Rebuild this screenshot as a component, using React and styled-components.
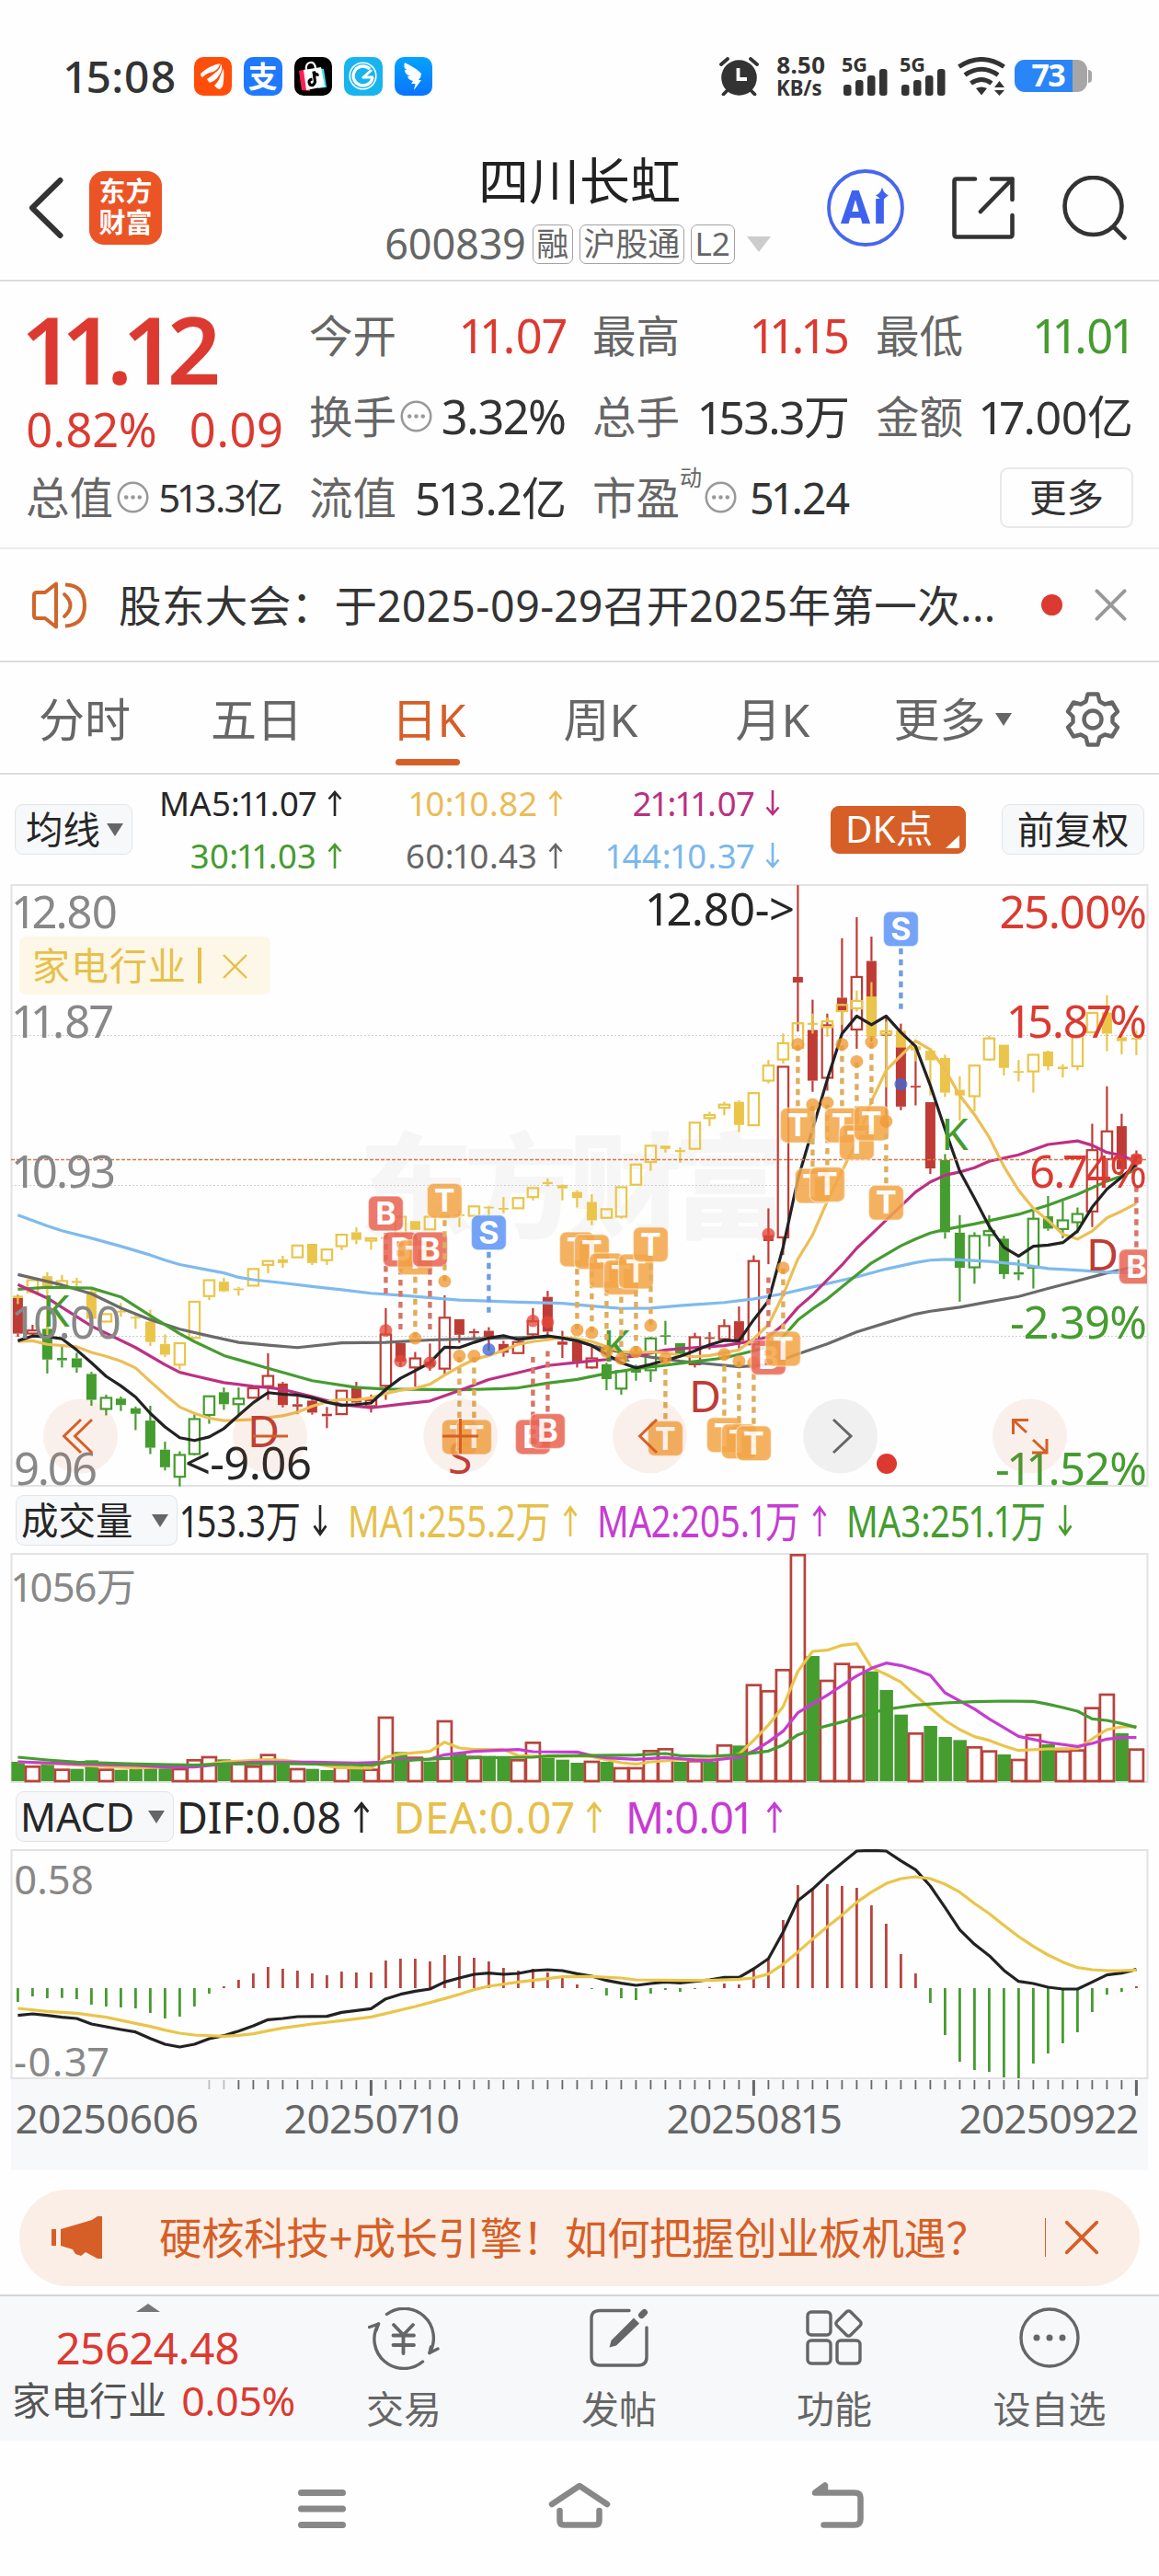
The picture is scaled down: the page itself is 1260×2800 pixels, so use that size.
import React, { useLayoutEffect, useRef, useState } from "react";
import styled, { createGlobalStyle } from "styled-components";

const RED = "#dc3a31";
const GREEN = "#459c2f";
const CANDLE_RED = "#bf3c36";
const GOLD = "#eac54a";
const ORANGE = "#d65f27";
const PURPLE = "#c63cd2";
const INK = "#333333";
const DIM = "#666666";
const FONT = '"Noto Sans", "Noto Sans CJK SC", sans-serif';

const GlobalStyle = createGlobalStyle`
  * { box-sizing: border-box; }
  body { margin: 0; background: #fefefe; }
`;

/* ---------- text ---------- */

const Glyphs = styled.span`
  display: inline-block;
  white-space: nowrap;
  font-size: ${(p) => p.$size}px;
  font-weight: ${(p) => p.$weight || 400};
  color: ${(p) => p.$color || "inherit"};
  font-variant-numeric: proportional-nums;
  transform-origin: 0 50%;
`;

// Makes its text take the given width: by tracking, or by condensing the glyphs.
function Fit({ w, size, weight, color, condense, children }) {
  const ref = useRef(null);
  const [style, setStyle] = useState(undefined);
  useLayoutEffect(() => {
    const natural = ref.current.offsetWidth;
    if (condense) {
      setStyle({ transform: `scaleX(${w / natural})`, marginRight: w - natural });
    } else {
      const track = (w - natural) / (String(children).length - 1);
      setStyle({ letterSpacing: track, marginRight: -track });
    }
  }, []);
  return (
    <Glyphs ref={ref} $size={size} $weight={weight} $color={color} style={style}>
      {children}
    </Glyphs>
  );
}

/* ---------- frame ---------- */

const Screen = styled.main`
  width: 1260px;
  height: 2800px;
  overflow: hidden;
  display: flex;
  flex-direction: column;
  background: #fefefe;
  color: ${INK};
  font-family: ${FONT};
`;

const StatusBar = styled.header`
  height: 166px;
  padding: 0 73px 0 71px;
  display: flex;
  justify-content: space-between;
  align-items: center;
`;

const StatusSide = styled.div`
  display: flex;
  align-items: center;
  gap: ${(p) => p.$gap}px;
`;

const StackedText = styled.div`
  display: flex;
  flex-direction: column;
  line-height: 25px;
  margin: 0 5px 0 6px;
`;

const AppIcons = styled.div`
  display: flex;
  gap: 13px;
  margin-left: 19px;
`;

const AppIcon = styled.div`
  width: 41.5px;
  height: 41.5px;
  border-radius: 10px;
  background: ${(p) => p.$bg};
  display: flex;
  align-items: center;
  justify-content: center;
  color: #fff;
  font-size: 32px;
  font-weight: 700;
  line-height: 1;
`;

const Battery = styled.div`
  display: flex;
  align-items: center;
  margin-left: -3px;
`;

const BatteryBody = styled.div`
  width: 79px;
  height: 35px;
  border-radius: 11px;
  background: linear-gradient(90deg, #2a85f6 0 63px, #a6a6a6 63px);
  color: #fff;
  line-height: 33px;
  padding-left: 19px;
`;

const BatteryNub = styled.div`
  width: 4px;
  height: 14px;
  margin-left: 1px;
  border-radius: 0 4px 4px 0;
  background: #a6a6a6;
`;

const Header = styled.section`
  height: 140px;
  display: grid;
  grid-template-columns: 1fr auto 1fr;
  border-bottom: 2px solid #dcdcdc;
`;

const HeaderLeft = styled.div`
  height: 120px;
  padding-left: 30px;
  display: flex;
  align-items: center;
  gap: 27px;
`;

const HeaderRight = styled.div`
  height: 120px;
  padding-right: 35px;
  display: flex;
  align-items: center;
  justify-content: flex-end;
  gap: 52px;
`;

const Logo = styled.div`
  width: 79px;
  height: 80px;
  border-radius: 16px;
  background: #eb5526;
  color: #fff;
  font-size: 29px;
  font-weight: 700;
  line-height: 34px;
  text-align: center;
  padding-top: 5px;
`;

const TitleBlock = styled.div`
  display: flex;
  flex-direction: column;
  align-items: center;
`;

const Title = styled.h1`
  margin: 0;
  height: 62px;
  font-size: 55px;
  line-height: 60px;
  font-weight: 400;
  color: #222;
`;

const CodeRow = styled.div`
  margin: 16px 4px 0 0;
  height: 43px;
  display: flex;
  align-items: center;
  gap: 7px;
  color: ${DIM};
  line-height: 40px;
`;

const Tag = styled.span`
  width: ${(p) => p.$w}px;
  height: 43px;
  border: 1.5px solid #a2a2a2;
  border-radius: 7px;
  font-size: 35px;
  line-height: 39px;
  text-align: center;
  white-space: nowrap;
`;

const Caret = styled.i`
  width: 0;
  height: 0;
  border-left: ${(p) => p.$w / 2}px solid transparent;
  border-right: ${(p) => p.$w / 2}px solid transparent;
  ${(p) => (p.$up ? "border-bottom" : "border-top")}: ${(p) => p.$h}px solid ${(p) => p.$color || DIM};
  margin-left: ${(p) => p.$ml || 0}px;
`;

/* ---------- quote ---------- */

const Quote = styled.section`
  height: 292px;
  padding: 0 28px;
  display: grid;
  grid-template-columns: repeat(4, 280px);
  column-gap: 28px;
  border-bottom: 2px solid #ececec;
`;

const LeadColumn = styled.div`
  padding-top: 22px;
  display: grid;
  grid-template-rows: 104px 70px 78px;
`;

const QuoteColumn = styled.div`
  padding-top: 16px;
  display: grid;
  grid-template-rows: 87px 88px 88px;
`;

const Row = styled.div`
  display: flex;
  align-items: center;
  justify-content: space-between;
  line-height: 60px;
`;

const Price = styled.div`
  display: flex;
  line-height: 102px;
  color: ${RED};
`;

const Label = styled.span`
  display: flex;
  align-items: center;
  gap: 4px;
  font-size: 47.5px;
  color: ${DIM};
`;

const Dynamic = styled.sup`
  align-self: flex-start;
  margin: -22px -1px 0 -4px;
  font-size: 24px;
  line-height: 60px;
`;

const MoreButton = styled.button`
  width: 145px;
  height: 66px;
  margin-left: auto;
  border: 2px solid #e8e8e8;
  border-radius: 9px;
  background: #fefefe;
  color: ${INK};
  font: 400 40.5px/56px ${FONT};
  padding: 0;
`;

const Notice = styled.section`
  height: 123px;
  padding: 0 35px;
  display: flex;
  align-items: center;
  border-bottom: 2px solid #dcdcdc;
  line-height: 60px;
`;

const NoticeText = styled.div`
  display: flex;
  width: 1001px;
  padding-left: 34px;
`;

const Dot = styled.i`
  width: 23px;
  height: 23px;
  border-radius: 50%;
  background: ${RED};
  margin: 0 35px 0 auto;
`;

const Tabs = styled.nav`
  height: 122px;
  display: flex;
  border-bottom: 2px solid #dcdcdc;
  padding-right: 42px;
`;

const Tab = styled.div`
  width: ${(p) => p.$w || 187}px;
  display: flex;
  flex-direction: column;
  align-items: center;
  font-size: 50px;
  line-height: 126px;
  height: 120px;
  text-indent: -3px;
  color: ${(p) => (p.$on ? ORANGE : DIM)};
`;

const TabLabel = styled.span`
  display: flex;
  align-items: center;
  height: 105px;
  padding-top: 19px;
`;

const Underline = styled.i`
  width: 70px;
  height: 7px;
  border-radius: 4px;
  background: ${ORANGE};
  margin-right: 6px;
`;

const GearSlot = styled.div`
  margin-left: auto;
  height: 124px;
  display: flex;
  align-items: center;
`;

/* ---------- indicators ---------- */

const MaBar = styled.section`
  height: 119px;
  padding: 0 16px;
  display: flex;
  align-items: center;
  line-height: 50px;
`;

const Pill = styled.button`
  width: ${(p) => p.$w}px;
  height: 55px;
  display: flex;
  align-items: center;
  justify-content: ${(p) => (p.$pl ? "space-between" : "center")};
  padding: 0 ${(p) => (p.$pl ? 9 : 0)}px 0 ${(p) => p.$pl || 0}px;
  border: 1.5px solid #e2e4e8;
  border-radius: 9px;
  background: #f7f8fa;
  color: #262626;
  font: 400 40.5px/50px ${FONT};
  white-space: nowrap;
`;

const DkPill = styled(Pill)`
  height: 52px;
  justify-content: flex-start;
  align-items: flex-end;
  padding: 0 5px 5px 15px;
  gap: 14px;
  line-height: 42px;
  border-color: ${ORANGE};
  background: ${ORANGE};
  color: #fff;
`;

const Corner = styled.i`
  border-left: 15px solid transparent;
  border-bottom: 14px solid #fff;
`;

const MaGrid = styled.div`
  width: 704px;
  margin-right: 55px;
  display: grid;
  grid-template-columns: 228px 240px 236px;
  row-gap: 7px;
`;

const MaItem = styled.div`
  display: flex;
  align-items: center;
  justify-content: flex-end;
  gap: 12px;
  color: ${(p) => p.$c};
`;

const PlotHead = styled.div`
  height: 71px;
  padding-left: 17px;
  display: flex;
  align-items: center;
  line-height: 60px;
`;

const PlotValue = styled.div`
  display: flex;
  align-items: center;
  gap: ${(p) => p.$gap || 13}px;
  margin-left: ${(p) => p.$ml}px;
  color: ${(p) => p.$c};
`;

const Plot = styled.svg`
  display: block;
  flex: none;
  width: 1260px;
  height: ${(p) => p.$h}px;
  font-family: ${FONT};
  font-variant-numeric: proportional-nums;
`;

/* ---------- footer ---------- */

const Banner = styled.section`
  flex: none;
  width: 1218px;
  height: 105px;
  margin: 21px auto 9px 21px;
  padding: 0 44px 0 35px;
  border-radius: 53px;
  background: #fbeee6;
  color: ${ORANGE};
  display: flex;
  align-items: center;
  line-height: 60px;
`;

const BannerText = styled.div`
  display: flex;
  margin-left: 62px;
  flex: 1;
`;

const BannerRule = styled.i`
  width: 1.5px;
  height: 42px;
  background: ${ORANGE};
  margin-right: 20px;
`;

const BottomBar = styled.nav`
  flex: none;
  height: 159px;
  border-top: 2px solid #d3d5d8;
  background: #f7f8fa;
  display: grid;
  grid-template-columns: 322px 234px 234px 234px 234px;
`;

const IndexCell = styled.div`
  display: flex;
  flex-direction: column;
  align-items: center;
  padding-top: 8px;
`;

const IndexValue = styled.div`
  display: flex;
  height: 68px;
  line-height: 78px;
`;

const IndexRow = styled.div`
  width: 322px;
  padding-left: 13px;
  display: flex;
  align-items: center;
  gap: 16px;
  line-height: 56px;
  font-size: 42px;
  color: #555;
`;

const NavItem = styled.div`
  display: flex;
  flex-direction: column;
  align-items: center;
  font-size: 41px;
  line-height: 45px;
  color: ${DIM};
`;

const IconSlot = styled.div`
  height: 100px;
  padding-top: 12px;
`;

const SystemNav = styled.div`
  flex: none;
  height: 147px;
  padding: 44px 321px 0 323px;
  display: flex;
  justify-content: space-between;
`;

/* ---------- icons ---------- */

const Arrow = ({ down, h = 28, w = 16 }) => (
  <svg width={w} height={h} viewBox="0 0 16 28" fill="none" stroke="currentColor" strokeWidth="2.6" preserveAspectRatio="none">
    {down ? <path d="M8 0V26M1.5 18.5L8 26L14.5 18.5" /> : <path d="M8 28V2M1.5 9.5L8 2L14.5 9.5" />}
  </svg>
);

const Ellipsis = () => (
  <svg width="35" height="35" viewBox="0 0 36 36">
    <circle cx="18" cy="18" r="16.2" fill="none" stroke="#999" strokeWidth="2.6" />
    <g fill="#999"><circle cx="10.5" cy="18" r="2.3" /><circle cx="18" cy="18" r="2.3" /><circle cx="25.5" cy="18" r="2.3" /></g>
  </svg>
);

const Cross = ({ size, color, sw }) => (
  <svg width={size} height={size} viewBox="0 0 36 36" fill="none" stroke={color} strokeWidth={sw} strokeLinecap="round">
    <path d="M2.5 2.5L33.5 33.5M33.5 2.5L2.5 33.5" />
  </svg>
);

const Alarm = () => (
  <svg width="43" height="42" viewBox="0 0 43 42">
    <circle cx="21.5" cy="22.5" r="19.300" fill="#333" />
    <path d="M2 8L9 2M41 8L34 2M9 36L4.500 40.500M34 36L38.500 40.500" stroke="#333" strokeWidth="3.8" strokeLinecap="round" />
    <path d="M20.500 12V24H30" stroke="#fefefe" strokeWidth="3.8" fill="none" />
  </svg>
);

const Signal = () => (
  <svg width="50" height="42" viewBox="0 0 50 42">
    <text x="0" y="16" fontSize="21.500" fontWeight="700" textLength="28" lengthAdjust="spacingAndGlyphs" fill="#333">5G</text>
    <g fill="#333">
      <rect x="2" y="30" width="8.500" height="12" rx="3" /><rect x="15" y="25" width="8.500" height="17" rx="3" />
      <rect x="28" y="20" width="8.500" height="22" rx="3" /><rect x="41" y="13" width="8.500" height="29" rx="3" />
    </g>
  </svg>
);

const Wifi = () => (
  <svg width="52" height="42" viewBox="0 0 52 42" fill="none" stroke="#333" strokeWidth="5">
    <path d="M1.500 10.500Q26 -5.500 50.500 10.500M8 19.500Q26 7 44 19.500M14.500 28.500Q26 20.500 37 28.500" />
    <path d="M20 34Q26 31 32 34L26 41.500Z" fill="#333" stroke="none" />
    <path d="M40 33L45.500 26L51 33ZM40 36L45.500 42L51 36Z" fill="#333" stroke="none" />
  </svg>
);

const AiIcon = () => (
  <svg width="84" height="84" viewBox="0 0 84 84">
    <circle cx="42" cy="42" r="40" fill="none" stroke="#4667ee" strokeWidth="3.8" />
    <g fill="#3f62ee" fontSize="50" fontWeight="900" fontFamily="Roboto, sans-serif">
      <text x="15" y="59" textLength="32" lengthAdjust="spacingAndGlyphs">A</text>
      <text x="50" y="59" textLength="15" lengthAdjust="spacingAndGlyphs">ı</text>
    </g>
    <path d="M60 19.500Q61.500 26 67 28.500Q61.500 31 60 37Q58.500 31 53 28.500Q58.500 26 60 19.500Z" fill="#3f62ee" />
  </svg>
);

const Share = () => (
  <svg width="68" height="68" viewBox="0 0 68 68" fill="none" stroke="#333" strokeWidth="4.6" strokeLinecap="round" strokeLinejoin="round">
    <path d="M25 2.500H5Q2.500 2.500 2.500 5V63Q2.500 65.500 5 65.500H63Q65.500 65.500 65.500 63V42" />
    <path d="M43 2.500H65.500V25M65.500 2.500L31 38" />
  </svg>
);

const Search = () => (
  <svg width="70" height="70" viewBox="0 0 70 70" fill="none" stroke="#333" strokeWidth="4.6" strokeLinecap="round">
    <circle cx="33.500" cy="33" r="31" /><path d="M56 56L67.500 67.500" />
  </svg>
);

const Speaker = () => (
  <svg width="60" height="52" viewBox="0 0 60 52" fill="none" stroke="#d0662c" strokeWidth="4" strokeLinejoin="round">
    <path d="M26 2.500V49.500L14 40H5Q2 40 2 37V15Q2 12 5 12H14Z" />
    <path d="M35 14Q48 26 35 38" strokeLinecap="round" /><path d="M36 3.500Q57 4 57 26Q57 47 36 48.500" />
  </svg>
);

const Gear = () => (
  <svg width="60" height="60" viewBox="0 0 60 60" fill="none" stroke={DIM} strokeWidth="4.400" strokeLinejoin="round">
    <path d="M24.500 2.500H35.500L37.500 10.500L43 13.500L51 11.500L57 21.500L51.500 27V33L57 38.500L51 48.500L43 46.500L37.500 49.500L35.500 57.500H24.500L22.500 49.500L17 46.500L9 48.500L3 38.500L8.500 33V27L3 21.500L9 11.500L17 13.500L22.500 10.500Z" />
    <circle cx="30" cy="30" r="9.500" />
  </svg>
);

const Megaphone = () => (
  <svg width="55" height="48" viewBox="0 0 55 48" fill={ORANGE}>
    <path d="M0 15H5V33H0ZM10 15L44 5L50 1H55V47H50L37 40L32 44L26 42L23 37L10 33Z" />
  </svg>
);

const TradeIcon = () => (
  <svg width="78" height="68" viewBox="0 0 78 68" fill="none" stroke={DIM} strokeWidth="3.400" strokeLinecap="round" strokeLinejoin="round">
    <path d="M20.500 7.500A32 32 0 0 1 67 49.500L76 45" />
    <path d="M59.500 59A32 32 0 0 1 11.500 18L1.500 21.500" />
    <path d="M67 49.500L68.500 43M11.500 18L9 25" />
    <path d="M28 19L38.500 30L49 19M27.500 30.500H50M27.500 41H50M38.500 30V50" strokeWidth="3.800" />
  </svg>
);

const PostIcon = () => (
  <svg width="66" height="66" viewBox="0 0 66 66" fill="none" stroke={DIM} strokeWidth="3.400" strokeLinecap="round">
    <path d="M44 3.500H12Q3 3.500 3 12V54Q3 63 12 63H54Q63 63 63 54V22" />
    <path d="M22.500 43.500L24.500 36L49 11.500L55 17.500L30 41.500Z" fill={DIM} stroke="none" />
    <path d="M57.500 8.500L60.500 5.500" strokeWidth="7" />
  </svg>
);

const GridIcon = () => (
  <svg width="62" height="66" viewBox="0 0 62 66" fill="none" stroke={DIM} strokeWidth="3.400">
    <rect x="2" y="5" width="25" height="25" rx="4" /><rect x="2" y="36" width="25" height="25" rx="4" /><rect x="34" y="36" width="25" height="25" rx="4" />
    <rect x="36" y="7" width="21" height="21" rx="3" transform="rotate(45 46.500 17.500)" />
  </svg>
);

const MoreIcon = () => (
  <svg width="66" height="66" viewBox="0 0 66 66" fill="none" stroke={DIM} strokeWidth="3.400">
    <circle cx="33" cy="33" r="31" />
    <g fill={DIM} stroke="none"><circle cx="19" cy="33" r="3.500" /><circle cx="33" cy="33" r="3.500" /><circle cx="47" cy="33" r="3.500" /></g>
  </svg>
);

/* ---------- chart data ---------- */

const X0 = 19.4;
const STEP = 16;
const cx = (i) => X0 + STEP * i;
const py = (v) => 950 + v / 2.306; // price plot
const vy = (v) => 1620 + v / 3; // volume plot
const my = (v) => 1940 + v / 3; // macd plot

// kind, high, top, bottom, low; capital kinds are hollow
const parse = (s) => s.trim().split(/\s*;\s*/).filter(Boolean).map((c) => {
  const [k, ...n] = c.split(/\s+/);
  return [k, ...n.map(Number)];
});

const PRICE = parse(`
r 1055 1063 1152 1160; R 1130 1143 1153 1156; g 1130 1140 1217 1252; g 1185 1213 1219 1237; g 1200 1214 1237 1250;
g 1248 1253 1318 1333; G 1305 1312 1342 1357; g 1310 1315 1331 1346; g 1335 1339 1353 1394; g 1333 1370 1438 1454;
g 1423 1443 1487 1495; G 1447 1455 1512 1535; G 1353 1365 1455 1457; G 1308 1308 1357 1378; g 1287 1299 1329 1343;
G 1287 1314 1330 1358; R 1288 1288 1314 1314; R 1201 1257 1285 1318; r 1273 1277 1331 1337; r 1309 1329 1335 1354;
r 1315 1320 1350 1355; r 1336 1353 1359 1389; R 1294 1294 1355 1355; r 1273 1284 1325 1330; R 1305 1318 1335 1350;
R 1088 1153 1284 1318; r 1176 1176 1222 1235; R 1198 1213 1238 1285; r 1177 1222 1235 1245; R 1056 1111 1241 1257;
r 1116 1116 1155 1175; r 1140 1146 1151 1165; r 1136 1145 1160 1195; r 1170 1178 1200 1210; R 1172 1172 1202 1202;
R 1088 1120 1155 1158; r 1045 1060 1147 1158; r 1145 1172 1180 1213; r 1172 1172 1222 1237; R 1180 1213 1238 1240;
g 1225 1229 1266 1294; G 1243 1245 1291 1305; g 1230 1235 1250 1270; G 1160 1163 1245 1273; g 1120 1156 1160 1180;
g 1176 1176 1203 1210; R 1150 1160 1230 1237; r 1148 1161 1165 1192; R 1116 1132 1167 1168; r 1084 1121 1170 1190;
R 956 969 1180 1190; r 838 905 920 978; R 482 482 912 955; r 28 258 272 395; r 315 391 518 546;
R 350 378 512 543; r 161 310 345 400; R 108 257 391 438; r 157 218 400 420; r 360 401 404 605;
r 375 433 583 592; r 440 531 535 580; r 572 572 738 752; g 702 717 898 914; g 855 899 987 1072;
G 898 906 987 1027; G 855 894 906 934; g 907 914 1003 1015; g 967 998 1004 1018; G 845 863 988 1039;
g 807 858 889 894; G 820 867 891 913; G 836 851 874 900; R 626 691 847 885; R 532 644 716 760;
r 601 632 740 752; r 693 703 727 735`);

const SECTOR = parse(`
y 1057 1057 1063 1078; Y 1017 1017 1049 1049; y 998 1008 1035 1160; Y 1005 1019 1037 1040; y 1012 1020 1025 1035;
y 1042 1046 1115 1115; Y 1102 1102 1123 1123; y 1075 1095 1099 1110; y 1105 1110 1114 1140; y 1092 1122 1173 1183;
y 1154 1178 1205 1211; Y 1175 1175 1231 1242; Y 1071 1071 1164 1164; Y 1017 1017 1059 1068; y 1012 1022 1046 1048;
y 1035 1039 1043 1057; Y 989 989 1033 1033; Y 969 969 981 1001; y 957 966 975 987; Y 930 930 962 962;
y 927 927 975 980; Y 940 940 969 980; Y 903 903 934 943; y 886 898 917 928; Y 912 912 920 942;
y 908 910 914 916; Y 858 858 905 905; y 870 870 892 892; Y 858 858 892 892; y 855 855 863 863;
y 843 853 857 885; Y 832 832 858 858; y 832 834 838 858; y 810 837 841 850; Y 811 811 839 839;
Y 786 786 811 818; y 763 772 777 783; y 778 780 788 818; y 793 797 812 836; y 803 822 868 880;
Y 839 839 863 863; Y 784 784 860 864; Y 727 727 780 780; Y 680 680 723 744; y 681 681 689 698;
y 685 692 697 724; Y 622 622 690 692; Y 596 603 613 632; Y 571 577 587 605; y 567 571 629 647;
Y 548 548 631 631; Y 466 479 519 525; Y 400 423 466 475; Y 373 373 437 437; y 350 373 378 400;
Y 360 368 385 408; Y 325 327 345 378; Y 292 317 338 345; y 271 307 408 410; Y 370 393 402 535;
y 393 393 435 435; y 430 432 442 470; y 437 443 467 555; y 453 461 548 559; y 507 541 555 618;
Y 479 479 558 595; Y 405 411 466 468; y 428 428 486 505; y 466 494 497 520; Y 452 452 496 548;
y 443 445 482 492; y 477 483 489 510; Y 404 404 483 492; Y 347 347 398 398; y 304 347 400 444;
y 405 409 419 452; y 393 411 415 454`);

const MA = [
  ["#6a6a6a", "0:1004 3:1030 5:1052 7:1088 9:1117 11:1141 13:1158 15:1174 17:1181 19:1187 22:1175 25:1174 28:1168 32:1164 36:1160 37:1163 38:1170 39:1182 40:1191 41:1199 43:1211 45:1221 47:1228 49:1235 51:1230 53:1203 55:1178 57:1148 59:1125 61:1103 62:1096 64:1086 66:1072 68:1059 70:1039 72:1020 74:1000 75:992 76:982"],
  ["#7fbaee", "0:855 2:882 3:894 5:913 7:933 9:955 10:968 11:979 13:993 14:1000 15:1011 16:1017 18:1025 20:1034 22:1042 24:1051 26:1056 30:1068 34:1073 37:1076 39:1083 41:1089 43:1088 45:1082 48:1074 50:1065 52:1052 54:1035 57:1010 59:990 61:974 62:968 63:966 64:967 66:971 68:978 70:989 72:993 74:998 76:1000"],
  [GREEN, "0:1041 2:1036 5:1038 7:1060 9:1107 11:1152 12:1172 14:1207 17:1239 20:1270 23:1287 25:1291 30:1293 33:1290 34:1288 36:1276 38:1267 40:1252 42:1240 44:1231 46:1222 48:1213 50:1195 51:1185 52:1160 53:1118 54:1090 55:1065 57:1005 58:975 60:932 61:915 62:900 63:891 65:877 68:853 70:830 72:803 74:770 75:757 76:740"],
  ["#bd3083", "0:1029 2:1063 5:1133 8:1187 10:1230 11:1249 12:1258 14:1275 16:1284 17:1287 18:1292 20:1310 22:1330 24:1338 26:1329 28:1321 30:1295 32:1267 34:1250 36:1232 38:1224 40:1217 42:1208 44:1193 46:1187 48:1182 50:1170 51:1160 52:1130 53:1087 54:1055 56:980 57:938 58:903 60:832 61:797 62:772 63:755 64:747 65:736 66:720 68:704 70:678 72:669 73:680 74:698 75:705 76:722"],
  ["#edbe57", "0:1172 1:1170 2:1179 4:1185 5:1199 6:1209 7:1221 8:1238 9:1272 10:1305 11:1336 12:1352 13:1364 14:1370 15:1369 16:1367 18:1358 19:1349 20:1334 21:1323 22:1317 23:1318 24:1313 25:1302 26:1294 27:1289 28:1279 29:1256 30:1235 31:1217 32:1207 33:1194 34:1179 35:1172 36:1167 37:1162 38:1165 39:1172 40:1185 41:1197 42:1200 43:1198 44:1200 45:1206 46:1210 47:1207 48:1200 49:1193 50:1165 51:1130 52:1055 53:965 54:905 55:820 56:745 57:670 58:570 59:492 60:455 61:418 62:440 63:490 64:555 65:603 66:660 67:733 68:793 69:838 70:868 71:903 72:915 73:895 74:862 75:845 76:826"],
  ["#222222", "0:1170 1:1158 2:1160 3:1165 4:1193 5:1225 6:1259 7:1283 8:1311 9:1352 10:1386 11:1413 12:1420 13:1411 14:1390 15:1357 16:1325 17:1300 18:1304 19:1306 20:1313 21:1324 22:1332 23:1330 24:1326 25:1292 26:1264 27:1245 28:1225 29:1186 30:1187 31:1174 32:1163 33:1157 34:1167 35:1162 36:1158 37:1163 38:1170 39:1182 40:1204 41:1225 42:1238 43:1229 44:1219 45:1209 46:1195 47:1180 48:1169 49:1170 50:1117 51:1070 52:935 53:765 54:640 55:515 56:400 57:356 58:378 59:356 60:397 61:432 62:530 63:640 64:745 65:813 66:883 67:936 68:958 69:933 70:930 71:924 72:895 73:835 74:790 75:760 76:728"],
];

// letter, candle, badge centre, anchor dot
const MARKS = [
  ["B", 25, 851, 1144], ["B", 26, 941, 1221], ["T", 27, 961, 1164], ["B", 28, 941, 1225], ["T", 29, 819, 1021],
  ["T", 30, 1411, 1208], ["T", 31, 1411, 1208], ["S", 32, 899, 1192], ["B", 35, 1411, 1120], ["B", 36, 1396, 1123],
  ["T", 38, 941, 1143], ["T", 39, 947, 1150], ["T", 40, 994, 1197], ["T", 41, 1011, 1215], ["T", 42, 996, 1198],
  ["T", 43, 929, 1132], ["T", 44, 1415, 1214], ["T", 48, 1406, 1204], ["T", 49, 1422, 1221], ["T", 50, 1427, 1225],
  ["B", 51, 1212, 903], ["T", 52, 1190, 987], ["T", 53, 630, 427], ["T", 54, 782, 578], ["T", 55, 778, 573],
  ["T", 56, 630, 427], ["T", 57, 673, 470], ["T", 58, 625, 421], ["T", 59, 824, 620], ["S", 60, 138, 527], ["B", 76, 984, 715],
];

const VOLUME = "g885 R898 g890 R908 g908 g880 R908 g911 g908 g906 g906 R906 R877 R867 g877 R884 R898 R860 g880 R906 g908 g912 R900 g900 R908 R738 g853 R869 g884 R750 g856 R866 g866 g868 R877 R820 g868 g878 g888 R882 g885 R903 R903 R847 R841 g885 R880 g885 R829 g832 R632 R652 R583 R208 g540 R618 R563 R573 g590 g651 g731 R790 g768 g804 g814 R835 R848 g861 R876 R795 g828 R848 R845 R707 R663 g792 R842"
  .split(" ").map((s) => [s[0], Number(s.slice(1))]);

const VOLUME_MA = [
  [GOLD, "0:885 3:893 5:898 8:905 12:900 14:885 17:878 18:880 20:890 21:898 22:904 24:906 25:870 26:860 28:851 29:821 30:840 31:845 33:845 34:865 36:868 38:866 39:868 40:878 41:888 42:893 43:885 45:878 47:878 48:872 49:860 50:815 51:765 52:705 53:590 54:525 55:521 56:505 57:500 58:578 59:600 60:625 61:670 62:710 63:750 64:780 65:803 66:815 67:833 68:848 70:843 72:842 73:810 74:780 75:771 76:770"],
  [PURPLE, "0:885 4:892 8:897 10:902 12:902 14:892 16:886 20:886 23:889 25:886 26:878 28:876 29:862 31:851 34:845 35:852 38:853 39:865 40:872 42:877 44:871 46:879 47:881 49:870 50:850 51:820 52:785 53:725 55:668 56:636 57:605 58:580 59:563 60:571 61:585 62:603 63:660 65:713 66:745 68:802 70:822 72:835 73:825 74:811 75:806 76:806"],
  [GREEN, "0:870 2:879 4:886 8:892 12:896 14:892 18:891 22:894 24:896 25:887 27:879 29:874 31:872 35:870 36:866 42:863 44:858 45:865 47:867 49:862 51:850 52:830 53:797 54:780 56:755 58:725 59:714 61:700 63:693 65:689 67:687 69:688 70:697 71:708 72:720 73:745 74:750 75:760 76:773"],
];

const HIST = [708, 690, 696, 695, 699, 717, 723, 726, 729, 744, 762, 756, 723, 681, 657, 636, 615, 594, 600, 606, 615, 621, 609, 612, 612, 573, 567, 567, 576, 555, 558, 564, 576, 597, 606, 600, 612, 627, 651, 666, 687, 696, 702, 681, 669, 675, 666, 659, 648, 651, 603, 567, 441, 327, 339, 324, 330, 336, 393, 453, 552, 615, 711, 816, 903, 930, 936, 954, 957, 909, 876, 843, 807, 741, 684, 675, 657];

const MACD_LINES = [
  ["#222222", "0:752 1:747 2:752 3:758 4:762 5:780 6:789 7:798 8:806 9:827 10:846 11:855 12:846 13:828 14:818 15:803 16:786 17:766 18:762 19:756 21:755 22:742 23:736 24:730 25:698 26:683 27:673 28:666 29:643 30:630 31:618 32:614 33:618 34:615 35:606 36:603 37:606 38:616 39:624 40:638 41:647 42:654 43:648 44:643 45:646 46:641 47:636 48:628 49:628 50:600 51:567 52:480 53:378 54:340 55:295 56:255 57:216 58:214 59:216 60:248 61:277 62:330 63:400 64:473 65:520 66:557 67:605 68:641 69:648 70:660 71:666 72:666 73:643 74:620 75:614 76:602"],
  [GOLD, "0:729 2:739 4:745 6:758 8:778 9:788 10:800 11:810 12:816 14:820 15:817 16:812 17:802 18:793 20:780 22:769 24:757 25:746 27:723 29:697 30:683 31:668 32:657 34:643 36:632 37:626 39:625 41:630 42:636 45:638 47:638 49:634 50:630 51:617 52:585 53:545 54:503 55:463 56:425 57:383 58:350 59:322 60:306 61:300 62:306 63:324 64:350 65:387 66:420 67:458 68:495 69:527 70:555 71:578 72:596 73:603 74:606 75:606 76:604"],
];

/* ---------- chart parts ---------- */

const Line = ({ pts, color, y }) => (
  <polyline
    fill="none" stroke={color} strokeWidth="3.200" strokeLinejoin="round"
    points={pts.split(" ").map((p) => { const [i, v] = p.split(":").map(Number); return `${cx(i)},${y(v)}`; }).join(" ")}
  />
);

const KIND = { r: CANDLE_RED, g: GREEN, y: GOLD };

function Candle({ i, d }) {
  const [k, hi, top, bot, lo] = d;
  const color = KIND[k.toLowerCase()];
  const hollow = k !== k.toLowerCase();
  const x = cx(i);
  const t = py(top), b = py(bot);
  return (
    <g stroke={color} strokeWidth="2.200">
      {hi < top && <line x1={x} x2={x} y1={py(hi)} y2={t} />}
      {lo > bot && <line x1={x} x2={x} y1={b} y2={py(lo)} />}
      {hollow
        ? <rect x={x - 5.700} y={t + 0.5} width="11.400" height={Math.max(b - t - 1, 2)} fill="none" />
        : <rect x={x - 5.500} y={t} width="11" height={Math.max(b - t, 1.800)} fill={color} stroke="none" />}
    </g>
  );
}

const MARK = {
  T: { dot: "#f09a35", fill: "#f3a648", dash: "#e0ad5c" },
  B: { dot: "#e5483a", fill: "#ea6553", dash: "#d87466" },
  S: { dot: "#3f68d6", fill: "#5e95f6", dash: "#6f9fe2" },
};

function Mark({ m }) {
  const [c, i, v, dot] = m;
  const look = MARK[c];
  const x = cx(i), y = py(v);
  const dir = dot > v ? 1 : -1;
  return (
    <g>
      <line x1={x} x2={x} y1={y + 21 * dir} y2={y + 87 * dir} stroke={look.dash} strokeWidth="4.400" strokeDasharray="6.500 5.500" />
      <ellipse cx={x} cy={py(dot)} rx="7" ry="6.800" fill={look.dot} opacity="0.78" />
      <g opacity="0.86">
        <rect x={x - 19} y={y - 19} width="38" height="38" rx="7" fill={look.fill} stroke="#ffffff" strokeOpacity="0.5" strokeWidth="1.500" />
        <text x={x} y={y + 12} fontSize="34" fontWeight="700" fill="#fff" textAnchor="middle" fontFamily="Inter, sans-serif">{c}</text>
      </g>
    </g>
  );
}

const Axis = ({ x, y, w, size = 49, color = "#888", end, children }) => (
  <text x={end ? x - w : x} y={y} fontSize={size} fill={color} textLength={w}>{children}</text>
);

function PricePlot() {
  return (
    <Plot $h={656} viewBox="0 961 1260 656">
      <text x="390" y="1336" fontSize="124" fontWeight="900" fill="#f6f6f6" textLength="466">东方财富</text>
      <g stroke="#cfcfcf" strokeWidth="1.200" strokeDasharray="2 2">
        <path d="M12 1125.500H1247M12 1288.500H1247M12 1452.500H1247" fill="none" />
      </g>
      <rect x="12.500" y="962" width="1235" height="653" fill="none" stroke="#e2e2e2" strokeWidth="2" />
      {PRICE.map((d, i) => <Candle key={i} i={i} d={d} />)}
      {SECTOR.map((d, i) => <Candle key={i} i={i} d={d} />)}
      {MA.map(([c, p]) => <Line key={c} color={c} pts={p} y={py} />)}
      <line x1="12" x2="1247" y1="1260.500" y2="1260.500" stroke="#d9774a" strokeWidth="1.300" strokeDasharray="4 2" />
      <g fontSize="48">
        <text x="46" y="1442" fill={GREEN}>K</text>
        <text x="655" y="1480" fill={GREEN}>K</text>
        <text x="1023" y="1250" fill={GREEN}>K</text>
        <text x="269" y="1573" fill={CANDLE_RED}>D</text>
        <text x="749" y="1535" fill={CANDLE_RED}>D</text>
        <text x="1181" y="1381" fill={CANDLE_RED}>D</text>
        <text x="487" y="1602" fill={CANDLE_RED}>S</text>
      </g>
      <svg x="0" y="961" width="1247" height="656" viewBox="0 961 1247 656">
        {MARKS.map((m) => <Mark key={m[1]} m={m} />)}
      </svg>
      <Axis x={15} y={1009} w={113}>12.80</Axis>
      <Axis x={15} y={1128} w={108}>11.87</Axis>
      <Axis x={15} y={1291} w={111}>10.93</Axis>
      <Axis x={15} y={1455} w={117}>10.00</Axis>
      <Axis x={15} y={1614} w={91}>9.06</Axis>
      <Axis end x={1247} y={1009} w={160} color={RED}>25.00%</Axis>
      <Axis end x={1247} y={1128} w={150} color={RED}>15.87%</Axis>
      <Axis end x={1247} y={1291} w={128} color={RED}>6.74%</Axis>
      <Axis end x={1247} y={1455} w={149} color={GREEN}>-2.39%</Axis>
      <Axis end x={1247} y={1614} w={165} color={GREEN}>-11.52%</Axis>
      <Axis x={704} y={1006} w={160} color="#262626">{"12.80->"}</Axis>
      <Axis x={201} y={1608} w={138} color="#262626">{"<-9.06"}</Axis>
      <rect x="21" y="1018" width="273" height="63" rx="7" fill="#fdf7e7" />
      <text x="35" y="1065" fontSize="41" textLength="167" fill="#e6c04c">家电行业</text>
      <path d="M217 1030V1069" stroke="#e6c04c" strokeWidth="4" />
      <path d="M243 1038L268 1063M268 1038L243 1063" stroke="#e6c04c" strokeWidth="2.400" />
      <g fill={ORANGE} fillOpacity="0.09">
        {[87.5, 293.5, 500.7, 706.5, 1119.5].map((x) => <circle key={x} cx={x} cy="1561" r="40.500" />)}
        <circle cx="913.600" cy="1561" r="40.500" fill="#000" fillOpacity="0.055" />
      </g>
      <g fill="none" stroke={ORANGE} strokeWidth="3">
        <path d="M88 1543L69.500 1561L88 1579M100 1543L81.500 1561L100 1579" />
        <path d="M275 1561H313M481 1561H520M500.500 1542V1580" />
        <path d="M714 1543L695.500 1561L714 1579" />
        <path d="M1118 1543.500H1101.500V1559M1101.500 1543.500L1116 1557M1122 1579H1138V1564M1138 1579L1123 1565" />
        <path d="M906 1543L925 1561L906 1579" stroke="#666" />
      </g>
      <circle cx="964" cy="1591" r="11" fill={RED} />
    </Plot>
  );
}

function VolumePlot() {
  const base = vy(948);
  return (
    <Plot $h={251} viewBox="0 1688 1260 251">
      <rect x="12.500" y="1689" width="1235" height="248" fill="none" stroke="#e2e2e2" strokeWidth="2" />
      {VOLUME.map(([k, v], i) => (k === "g"
        ? <rect key={i} x={cx(i) - 7} y={vy(v)} width="14.500" height={base - vy(v)} fill={GREEN} />
        : <rect key={i} x={cx(i) - 7.500} y={vy(v) + 1} width="15" height={base - vy(v) - 1} fill="#fefefe" stroke="#b8443e" strokeWidth="2.700" />))}
      {VOLUME_MA.map(([c, p]) => <Line key={c} color={c} pts={p} y={vy} />)}
      <Axis x={14} y={1741} w={134} size={43.5}>1056万</Axis>
    </Plot>
  );
}

function MacdPlot() {
  const majors = [24, 50, 76];
  return (
    <Plot $h={349} viewBox="0 2010 1260 349">
      <rect x="12" y="2260" width="1236" height="99" fill="#f7f8fa" />
      <rect x="12.500" y="2011" width="1235" height="248" fill="none" stroke="#e2e2e2" strokeWidth="2" />
      {HIST.map((v, i) => <line key={i} x1={cx(i)} x2={cx(i)} y1={my(663)} y2={my(v)} stroke={v > 663 ? GREEN : "#b8443e"} strokeWidth="2.800" />)}
      {MACD_LINES.map(([c, p]) => <Line key={c} color={c} pts={p} y={my} />)}
      <Axis x={15} y={2059} w={87} size={43.5}>0.58</Axis>
      <Axis x={15} y={2257} w={103} size={43.5}>-0.37</Axis>
      {HIST.map((_, i) => i >= 13 && (
        <line key={i} x1={cx(i)} x2={cx(i)} y1="2261" y2={majors.includes(i) ? 2278 : 2271} stroke={DIM}
          strokeOpacity={i < 15 ? 0.4 : 1} strokeWidth={majors.includes(i) ? 3 : 1.8} />
      ))}
      <Axis x={17} y={2319} w={199} size={44} color={DIM}>20250606</Axis>
      <Axis x={309} y={2319} w={191} size={44} color={DIM}>20250710</Axis>
      <Axis x={725} y={2319} w={191} size={44} color={DIM}>20250815</Axis>
      <Axis x={1043} y={2319} w={195} size={44} color={DIM}>20250922</Axis>
    </Plot>
  );
}

/* ---------- page ---------- */

export default function App() {
  return (
    <Screen>
      <GlobalStyle />
      <StatusBar>
        <StatusSide $gap={0}>
          <Fit w={121} size={48} weight={500}>15:08</Fit>
          <AppIcons>
            <AppIcon $bg="#ff4d0a">
              <svg width="28" height="30" viewBox="0 0 28 30" fill="#fff">
                <path d="M1 12Q11 3 22 1Q22 6 15 10Q8 11 3 16Q1 15 1 12ZM8 18Q15 13 17 11Q23 7 23 1Q27 7 19 17Q15 21 11 22Q9 20 8 18ZM16 25Q21 20 22 16L26 6Q27 18 25 26L22 29Q18 28 16 25Z" />
              </svg>
            </AppIcon>
            <AppIcon $bg="#1f79fd">支</AppIcon>
            <AppIcon $bg="#000">
              <svg width="32" height="34" viewBox="0 0 32 34">
                <path d="M1 11L10 9L13 33L4 32Z" fill="#ff1f56" />
                <path d="M20 8L28 9L31 29L22 30Z" fill="#3ce8e2" />
                <path d="M6 10L25 7L29 28L9 32Z" fill="#fff" />
                <path d="M9 10Q8 3 13 2Q18 1 19 8" fill="none" stroke="#fff" strokeWidth="2.200" />
                <path d="M17 11.500L18.500 23Q17 28 13 26Q10 21 15.500 20M17 12Q19 16 22.500 15" fill="none" stroke="#000" strokeWidth="3.200" />
              </svg>
            </AppIcon>
            <AppIcon $bg="#17b4ef">
              <svg width="31" height="31" viewBox="0 0 31 31" fill="none" stroke="#fff">
                <circle cx="15.500" cy="15.500" r="14.300" strokeWidth="1.600" />
                <path d="M26 17A10.500 10.500 0 1 1 23 8" strokeWidth="3.400" />
                <path d="M25 9L15 18M16 17H27" strokeWidth="2.800" />
              </svg>
            </AppIcon>
            <AppIcon $bg="linear-gradient(#04a3ff, #0a74ff)">
              <svg width="22" height="32" viewBox="0 0 22 32" fill="#fff"><path d="M2 1Q16 8 20 13Q20 17 17 20H20L12 31L13.500 24H9L11 21Q6 20 5 16L8 16Q2 14 2 9L4 9Q0 6 2 1Z" /></svg>
            </AppIcon>
          </AppIcons>
        </StatusSide>
        <StatusSide $gap={13}>
          <Alarm />
          <StackedText>
            <Fit w={53} size={25} weight={700} condense>8.50</Fit>
            <Fit w={50} size={22.5} weight={700} condense>KB/s</Fit>
          </StackedText>
          <Signal />
          <Signal />
          <Wifi />
          <Battery>
            <BatteryBody><Fit w={37} size={34} weight={700}>73</Fit></BatteryBody>
            <BatteryNub />
          </Battery>
        </StatusSide>
      </StatusBar>

      <Header>
        <HeaderLeft>
          <svg width="40" height="68" viewBox="0 0 40 68" fill="none" stroke="#333" strokeWidth="6" strokeLinecap="round" strokeLinejoin="round"><path d="M35.500 4L5 34L35.500 64" /></svg>
          <Logo>东方<br />财富</Logo>
        </HeaderLeft>
        <TitleBlock>
          <Title>四川长虹</Title>
          <CodeRow>
            <Fit w={153} size={45}>600839</Fit>
            <Tag $w={44}>融</Tag><Tag $w={114}>沪股通</Tag><Tag $w={48}>L2</Tag>
            <Caret $w={26} $h={17} $color="#ccc" $ml={6} />
          </CodeRow>
        </TitleBlock>
        <HeaderRight><AiIcon /><Share /><Search /></HeaderRight>
      </Header>

      <Quote>
        <LeadColumn>
          <Price><Fit w={211} size={102} weight={600}>11.12</Fit></Price>
          <Row><Fit w={143} size={50.5} color={RED}>0.82%</Fit><Fit w={102} size={50.5} color={RED}>0.09</Fit></Row>
          <Row><Label>总值<Ellipsis /></Label><Fit w={136} size={42}>513.3亿</Fit></Row>
        </LeadColumn>
        <QuoteColumn>
          <Row><Label>今开</Label><Fit w={114} size={50.5} color={RED}>11.07</Fit></Row>
          <Row><Label>换手<Ellipsis /></Label><Fit w={136} size={50.5}>3.32%</Fit></Row>
          <Row><Label>流值</Label><Fit w={165} size={49}>513.2亿</Fit></Row>
        </QuoteColumn>
        <QuoteColumn>
          <Row><Label>最高</Label><Fit w={106} size={50.5} color={RED}>11.15</Fit></Row>
          <Row><Label>总手</Label><Fit w={163} size={50}>153.3万</Fit></Row>
          <Row><Label>市盈<Dynamic>动</Dynamic><Ellipsis /></Label><Fit w={109} size={46.5}>51.24</Fit></Row>
        </QuoteColumn>
        <QuoteColumn>
          <Row><Label>最低</Label><Fit w={107} size={50.5} color={GREEN}>11.01</Fit></Row>
          <Row><Label>金额</Label><Fit w={165} size={50}>17.00亿</Fit></Row>
          <Row><MoreButton>更多</MoreButton></Row>
        </QuoteColumn>
      </Quote>

      <Notice>
        <Speaker />
        <NoticeText><Fit w={953} size={46.5}>股东大会：于2025-09-29召开2025年第一次...</Fit></NoticeText>
        <Dot />
        <Cross size={35} color="#999" sw={4} />
      </Notice>

      <Tabs>
        <Tab><TabLabel>分时</TabLabel></Tab>
        <Tab><TabLabel>五日</TabLabel></Tab>
        <Tab $on><TabLabel>日K</TabLabel><Underline /></Tab>
        <Tab><TabLabel>周K</TabLabel></Tab>
        <Tab><TabLabel>月K</TabLabel></Tab>
        <Tab $w={204}><TabLabel>更多<Caret $w={18} $h={14} $ml={10} /></TabLabel></Tab>
        <GearSlot><Gear /></GearSlot>
      </Tabs>

      <MaBar>
        <Pill $w={128} $pl={11}>均线<Caret $w={18} $h={14} /></Pill>
        <MaGrid>
          <MaItem $c="#262626"><Fit w={171} size={36.5}>MA5:11.07</Fit><Arrow /></MaItem>
          <MaItem $c="#ecbb55"><Fit w={138} size={36.5}>10:10.82</Fit><Arrow /></MaItem>
          <MaItem $c="#bb2f83"><Fit w={132} size={36.5}>21:11.07</Fit><Arrow down /></MaItem>
          <MaItem $c={GREEN}><Fit w={137} size={36.5}>30:11.03</Fit><Arrow /></MaItem>
          <MaItem $c={DIM}><Fit w={143} size={36.5}>60:10.43</Fit><Arrow /></MaItem>
          <MaItem $c="#7ab8ec"><Fit w={160} size={36.5}>144:10.37</Fit><Arrow down /></MaItem>
        </MaGrid>
        <DkPill $w={147} $pl={15}><Fit w={95} size={40.5}>DK点</Fit><Corner /></DkPill>
        <RightPill $w={155}>前复权</RightPill>
      </MaBar>

      <PricePlot />

      <PlotHead>
        <Pill $w={176} $pl={5}>成交量<Caret $w={18} $h={14} /></Pill>
        <PlotValue $ml={4} $c="#262626"><Fit w={130} size={47} condense>153.3万</Fit><Arrow down h={34} /></PlotValue>
        <PlotValue $ml={22} $c="#e6c04c"><Fit w={221} size={47} condense>MA1:255.2万</Fit><Arrow h={34} /></PlotValue>
        <PlotValue $ml={21} $c={PURPLE}><Fit w={221} size={47} condense>MA2:205.1万</Fit><Arrow h={34} /></PlotValue>
        <PlotValue $ml={21} $c={GREEN}><Fit w={217} size={47} condense>MA3:251.1万</Fit><Arrow down h={34} /></PlotValue>
      </PlotHead>
      <VolumePlot />

      <PlotHead>
        <Pill $w={172} $pl={4}><Fit w={124} size={43}>MACD</Fit><Caret $w={18} $h={14} /></Pill>
        <PlotValue $ml={3} $c="#262626"><Fit w={179} size={46.5}>DIF:0.08</Fit><Arrow h={34} w={18} /></PlotValue>
        <PlotValue $ml={25} $c="#e6c04c"><Fit w={197} size={46.5}>DEA:0.07</Fit><Arrow h={34} w={18} /></PlotValue>
        <PlotValue $ml={25} $gap={15} $c={PURPLE}><Fit w={138} size={46.5}>M:0.01</Fit><Arrow h={34} w={18} /></PlotValue>
      </PlotHead>
      <MacdPlot />

      <Banner>
        <Megaphone />
        <BannerText><Fit w={902} size={46.5}>硬核科技+成长引擎！如何把握创业板机遇？</Fit></BannerText>
        <BannerRule />
        <Cross size={38} color={ORANGE} sw={3.4} />
      </Banner>

      <BottomBar>
        <IndexCell>
          <Caret $up $w={26} $h={9} $color="#777" />
          <IndexValue><Fit w={200} size={47.5} color={RED}>25624.48</Fit></IndexValue>
          <IndexRow>家电行业<Fit w={124} size={44.5} color={RED}>0.05%</Fit></IndexRow>
        </IndexCell>
        <NavItem><IconSlot><TradeIcon /></IconSlot>交易</NavItem>
        <NavItem><IconSlot><PostIcon /></IconSlot>发帖</NavItem>
        <NavItem><IconSlot><GridIcon /></IconSlot>功能</NavItem>
        <NavItem><IconSlot><MoreIcon /></IconSlot>设自选</NavItem>
      </BottomBar>

      <SystemNav>
        <svg width="54" height="52" viewBox="0 0 54 52" fill="none" stroke="#888" strokeWidth="7" strokeLinecap="round"><path d="M4.500 12.500H49.500M4.500 30H49.500M4.500 47.500H49.500" /></svg>
        <svg width="68" height="52" viewBox="0 0 68 52" fill="none" stroke="#888" strokeWidth="6.500" strokeLinecap="round" strokeLinejoin="round"><path d="M4 25L34 5L64 25" /><path d="M12.500 32V43Q12.500 47.500 17 47.500H51Q55.500 47.500 55.500 43V32" /></svg>
        <svg width="57" height="52" viewBox="0 0 57 52" fill="none" stroke="#888" strokeWidth="6.500" strokeLinecap="round" strokeLinejoin="round"><path d="M13.500 47.500H47Q53.500 47.500 53.500 41V18Q53.500 12.500 47 12.500H4L15 4.500V12" /></svg>
      </SystemNav>
    </Screen>
  );
}

const RightPill = styled(Pill)`
  margin-left: auto;
`;
